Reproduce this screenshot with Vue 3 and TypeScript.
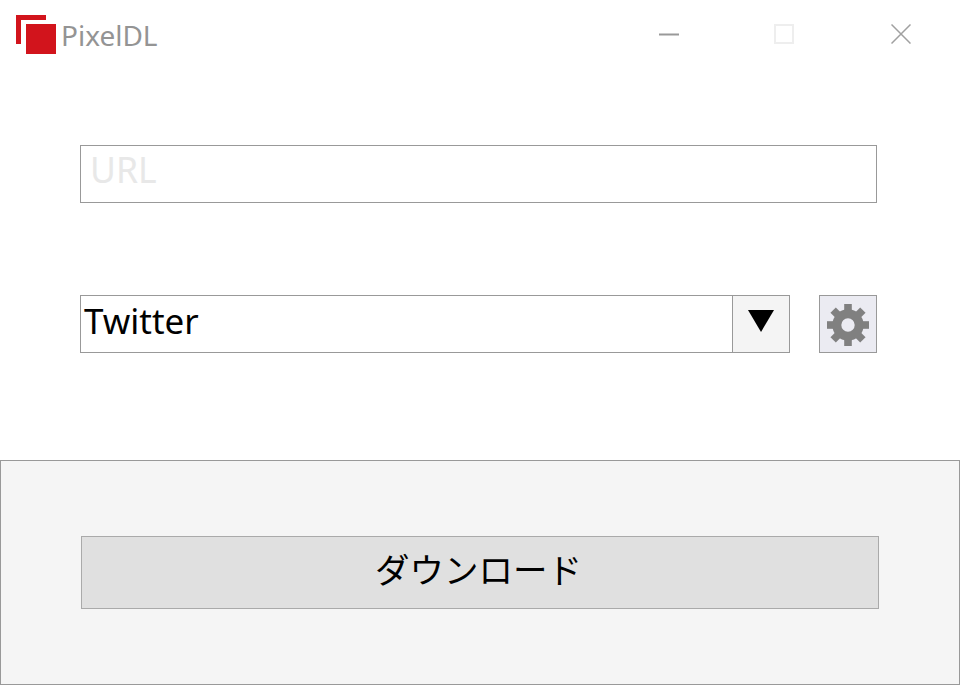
<script setup lang="ts">
const teeth: number[] = [0, 45, 90, 135, 180, 225, 270, 315]
</script>

<template>
  <div class="window">
    <header class="titlebar">
      <div class="brand">
        <span class="logo"><span class="logo-back"></span><span class="logo-front"></span></span>
        <span class="title">PixelDL</span>
      </div>
      <div class="controls">
        <svg class="ctl ctl-min" width="20" height="20" viewBox="0 0 20 20"><path d="M0 10.5H20" stroke="#999" stroke-width="2" /></svg>
        <svg class="ctl ctl-max" width="20" height="20" viewBox="0 0 20 20"><rect x="1" y="1" width="18" height="18" fill="none" stroke="#eee" stroke-width="2" /></svg>
        <svg class="ctl ctl-close" width="20" height="20" viewBox="0 0 20 20"><path d="M0.5 0.5L19.5 19.5M19.5 0.5L0.5 19.5" stroke="#a0a0a0" stroke-width="1.5" /></svg>
      </div>
    </header>

    <main class="form">
      <div class="url-field"><span class="placeholder">URL</span></div>

      <div class="row">
        <div class="combo">
          <span class="combo-value">Twitter</span>
          <span class="combo-arrow">
            <svg width="26" height="22" viewBox="0 0 26 22"><path d="M0 0H26L13 22Z" fill="#000" /></svg>
          </span>
        </div>
        <button class="gear-btn" type="button" aria-label="settings">
          <svg width="44" height="44" viewBox="0 0 44 44">
            <rect v-for="t in teeth" :key="t" x="18.2" y="1" width="7.6" height="12" fill="#808080" :transform="`rotate(${t} 22 22)`" />
            <circle cx="22" cy="22" r="11.2" fill="none" stroke="#808080" stroke-width="9" />
          </svg>
        </button>
      </div>
    </main>

    <footer class="footer">
      <button class="download" type="button">ダウンロード</button>
    </footer>
  </div>
</template>

<style>
html, body { margin: 0; padding: 0; background: #fff; }
</style>

<style scoped>
.window {
  width: 960px;
  height: 685px;
  display: flex;
  flex-direction: column;
  box-sizing: border-box;
  overflow: hidden;
  background: #fff;
  font-family: "Noto Sans", "Noto Sans CJK JP", sans-serif;
}
.titlebar {
  height: 68px;
  display: flex;
  justify-content: space-between;
  align-items: flex-start;
  flex: none;
}
.brand {
  display: flex;
  align-items: flex-start;
  padding: 15px 0 0 16px;
}
.logo {
  position: relative;
  display: block;
  width: 40px;
  height: 39px;
}
.logo-back {
  position: absolute;
  left: 0;
  top: 0;
  width: 30px;
  height: 29px;
  box-sizing: border-box;
  border-top: 5px solid #d2141c;
  border-left: 5px solid #d2141c;
}
.logo-front {
  position: absolute;
  left: 10px;
  top: 9px;
  width: 30px;
  height: 30px;
  background: #d2141c;
}
.title {
  margin-left: 5px;
  font-size: 28px;
  line-height: 40px;
  color: #949494;
}
.controls {
  display: flex;
  padding: 24px 49px 0 0;
}
.ctl { display: block; }
.ctl-max { margin-left: 95px; }
.ctl-close { margin-left: 97px; }
.form {
  flex: 1;
  display: flex;
  flex-direction: column;
  padding: 77px 83px 0 80px;
}
.url-field {
  height: 58px;
  box-sizing: border-box;
  border: 1px solid #999;
  display: flex;
  align-items: center;
  padding: 0 9px 10px;
}
.placeholder {
  font-size: 35.5px;
  line-height: 44px;
  color: #e8e8e8;
}
.row {
  margin-top: 92px;
  display: flex;
  gap: 29px;
}
.combo {
  flex: 1;
  height: 58px;
  box-sizing: border-box;
  border: 1px solid #999;
  display: flex;
  align-items: stretch;
}
.combo-value {
  flex: 1;
  padding: 0 0 6px 3px;
  font-size: 35px;
  line-height: 50px;
  color: #000;
}
.combo-arrow {
  width: 57px;
  box-sizing: border-box;
  border-left: 1px solid #999;
  background: #f4f4f4;
  display: flex;
  justify-content: center;
  padding-top: 14px;
}
.combo-arrow svg { display: block; }
.gear-btn {
  width: 58px;
  height: 58px;
  box-sizing: border-box;
  border: 1px solid #999;
  background: #ebebf2;
  padding: 1px 0 0;
  display: flex;
  align-items: center;
  justify-content: center;
}
.gear-btn svg { display: block; }
.footer {
  flex: none;
  height: 225px;
  box-sizing: border-box;
  border: 1px solid #999;
  background: #f5f5f5;
  padding: 75px 80px 0 80px;
}
.download {
  display: block;
  width: 798px;
  height: 73px;
  box-sizing: border-box;
  border: 1px solid #aaa;
  background: #e0e0e0;
  padding: 0 3px 10px 0;
  font-family: "Noto Sans CJK JP", "Noto Sans", sans-serif;
  font-size: 34.5px;
  color: #000;
}
</style>
